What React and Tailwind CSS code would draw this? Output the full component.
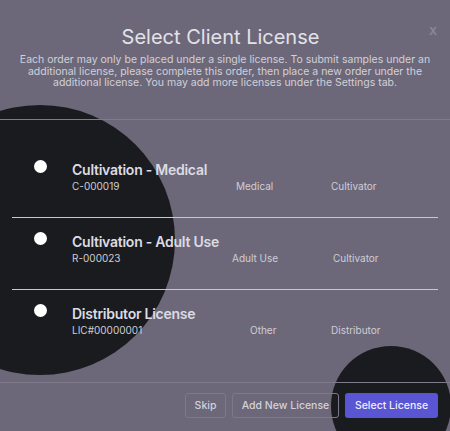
import React from "react";

const licenses = [
  {
    id: "med",
    name: "Cultivation - Medical",
    number: "C-000019",
    type: "Medical",
    category: "Cultivator",
    typePad: "pl-[4px]",
    catPad: "pl-0",
  },
  {
    id: "adult",
    name: "Cultivation - Adult Use",
    number: "R-000023",
    type: "Adult Use",
    category: "Cultivator",
    typePad: "pl-0",
    catPad: "pl-[2px]",
  },
  {
    id: "dist",
    name: "Distributor License",
    number: "LIC#00000001",
    type: "Other",
    category: "Distributor",
    typePad: "pl-[18px]",
    catPad: "pl-0",
  },
];

const LicenseRow = ({ license, last }) => {
  return (
    <div
      className={`flex items-start h-[72px] pt-[15px] ${
        last ? "" : "border-b border-[#c9c7cf]"
      }`}
    >
      {/* radio dot */}
      <div className="ml-[22px] mt-[-1px] w-[13px] h-[13px] rounded-full bg-white shrink-0" />

      <div className="ml-[25px] flex flex-col">
        <div className="text-[14px] leading-[18px] font-semibold tracking-[-0.25px] text-[#dddbe2]">
          {license.name}
        </div>
        <div className="flex text-[10px] leading-[14px] text-[#cfcdd5]">
          <span className="w-[160px]">{license.number}</span>
          <span className={`w-[99px] ${license.typePad}`}>{license.type}</span>
          <span className={license.catPad}>{license.category}</span>
        </div>
      </div>
    </div>
  );
};

const App = () => {
  return (
    <div
      className="relative w-[450px] h-[431px] overflow-hidden bg-[#6c687a] flex flex-col"
      style={{ fontFamily: "Inter, 'Noto Sans', sans-serif" }}
    >
      {/* Decorative blobs */}
      <div className="absolute left-[-95px] top-[105px] w-[270px] h-[270px] rounded-full bg-[#1a1b1f]" />
      <div className="absolute left-[331px] top-[346px] w-[120px] h-[120px] rounded-full bg-[#1a1b1f]" />

      {/* Header */}
      <div className="relative z-10 pt-[25px] pb-[30px] px-[12px] border-b border-[#7f7b8c] text-center">
        <button className="absolute right-[13px] top-[24px] text-[11px] leading-[14px] font-bold text-[#8a8698]">
          X
        </button>
        <h2 className="pr-[9px] text-[20px] leading-[24px] text-[#e3e2e8]">
          Select Client License
        </h2>
        <p className="mt-[5px] text-[10.5px] leading-[11.5px] text-[#d2d0d8]">
          Each order may only be placed under a single license. To submit samples under an
          additional license, please complete this order, then place a new order under the
          additional license. You may add more licenses under the Settings tab.
        </p>
      </div>

      {/* License list */}
      <div className="relative z-10 flex-1 px-[12px] pt-[26px]">
        {licenses.map((lic, i) => (
          <LicenseRow key={lic.id} license={lic} last={i === licenses.length - 1} />
        ))}
      </div>

      {/* Footer */}
      <div className="relative z-10 border-t border-[#7f7b8c] flex justify-end gap-[6px] pt-[10px] pb-[13px] pr-[12px]">
        <button className="w-[41px] h-[25px] rounded-[3px] border border-[#7d798b] text-[10.5px] font-medium whitespace-nowrap text-[#d3d1d9]">
          Skip
        </button>
        <button className="w-[107px] h-[25px] rounded-[3px] border border-[#7d798b] text-[10.5px] font-medium whitespace-nowrap text-[#d3d1d9]">
          Add New License
        </button>
        <button className="w-[93px] h-[25px] rounded-[3px] bg-[#5a55d3] text-[10.5px] font-medium whitespace-nowrap text-[#f0effa]">
          Select License
        </button>
      </div>
    </div>
  );
};

export default App;
